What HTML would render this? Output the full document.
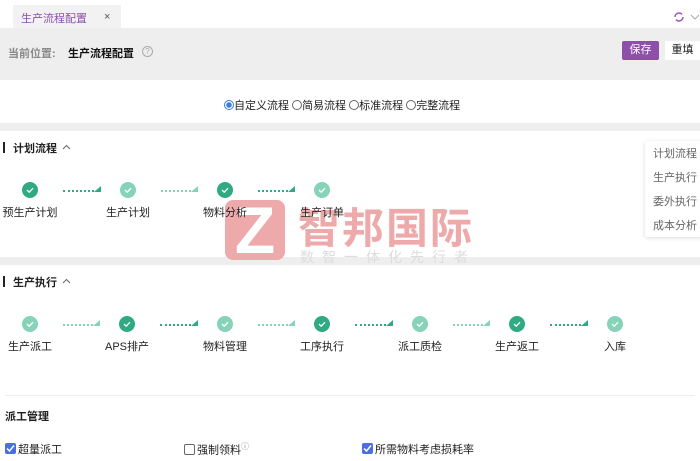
<!DOCTYPE html>
<html><head><meta charset="utf-8"><style>
*{margin:0;padding:0;box-sizing:border-box}
body{width:700px;height:461px;overflow:hidden;background:#fff;font-family:"Liberation Sans","Noto Sans CJK SC",sans-serif;font-size:11px;color:#222;position:relative}
.a{position:absolute;white-space:nowrap}
.c{position:absolute;width:16px;height:16px;border-radius:50%;}
.c svg{position:absolute;left:3px;top:3px}
.d{background:#2faa83}.l{background:#86d3b8}
.ar{position:absolute;height:0;border-top:2px dotted #2faa83;width:30px}
.ar:after{content:"";position:absolute;right:-7px;top:-6px;border-left:7px solid transparent;border-bottom:6px solid #2faa83}
.ar.lt{border-top-color:#86d3b8}.ar.lt:after{border-bottom-color:#86d3b8}
.lb{position:absolute;font-size:11px;transform:translateX(-50%)}
.cb{display:inline-block;width:11px;height:11px;border-radius:2px;vertical-align:-1px;margin-right:2px;position:relative}
</style></head><body>
<div class="a" style="left:0;top:28px;width:700px;height:52px;background:#eee"></div>
<div class="a" style="left:13px;top:5px;width:108px;height:23px;background:#f2f2f2"></div>
<div class="a" style="left:21px;top:10px;color:#8e4fa8;font-size:11px">生产流程配置</div>
<div class="a" style="left:104px;top:11px;color:#555;font-size:11px">×</div>
<svg class="a" style="left:673px;top:11px" width="12" height="12" viewBox="0 0 12 12"><path d="M2 6a4 4 0 0 1 7-2.6M10 6a4 4 0 0 1-7 2.6" stroke="#9b59b6" stroke-width="1.5" fill="none"/></svg>
<svg class="a" style="left:690px;top:13px" width="10" height="8"><path d="M1 2l4 4 4-4" stroke="#aaa" fill="none"/></svg>
<div class="a" style="left:8px;top:45px;color:#888;font-weight:bold;font-size:11px">当前位置: </div>
<div class="a" style="left:68px;top:45px;font-weight:bold;font-size:11px;color:#111">生产流程配置</div>
<div class="a" style="left:142px;top:46px;width:11px;height:11px;border:1px solid #aaa;border-radius:50%;font-size:8px;color:#aaa;text-align:center;line-height:9px">?</div>
<div class="a" style="left:622px;top:41px;width:37px;height:19px;background:#8e4fa8;border-radius:2px;color:#fff;text-align:center;line-height:19px">保存</div>
<div class="a" style="left:665px;top:41px;width:35px;height:19px;background:#fff;text-align:center;line-height:19px">重填</div>
<div class="a" style="left:224px;top:97px;font-size:11px"><span style="display:inline-block;width:10px;height:10px;border:1px solid #3b7de0;border-radius:50%;vertical-align:-1px;background:radial-gradient(#3b7de0 2.5px,#fff 3px)"></span>自定义流程 <span style="display:inline-block;width:10px;height:10px;border:1px solid #666;border-radius:50%;vertical-align:-1px"></span>简易流程 <span style="display:inline-block;width:10px;height:10px;border:1px solid #666;border-radius:50%;vertical-align:-1px"></span>标准流程 <span style="display:inline-block;width:10px;height:10px;border:1px solid #666;border-radius:50%;vertical-align:-1px"></span>完整流程</div>
<div class="a" style="left:0;top:123px;width:700px;height:8px;background:#eee"></div>
<div class="a" style="left:0;top:257px;width:700px;height:8px;background:#eee"></div>
<div class="a" style="left:3px;top:142px;width:2px;height:11px;background:#222"></div>
<div class="a" style="left:13px;top:140px;font-weight:bold">计划流程</div>
<svg class="a" style="left:62px;top:144px" width="9" height="6"><path d="M1 5l3.5-3.5L8 5" stroke="#666" fill="none"/></svg>
<div class="a" style="left:3px;top:276px;width:2px;height:11px;background:#222"></div>
<div class="a" style="left:13px;top:274px;font-weight:bold">生产执行</div>
<svg class="a" style="left:62px;top:278px" width="9" height="6"><path d="M1 5l3.5-3.5L8 5" stroke="#666" fill="none"/></svg>
<!-- watermark -->
<div class="a" style="left:225px;top:200px;width:60px;height:60px;background:#eeaaab;border-radius:8px;color:#fff;font-size:66px;font-weight:bold;text-align:center;line-height:60px;font-family:'Liberation Sans',sans-serif">Z</div>
<div class="a" style="left:298px;top:195px;font-size:42px;color:#eeaaab;font-weight:bold;letter-spacing:2px">智邦国际</div>
<div class="a" style="left:300px;top:247px;font-size:14px;color:#ddd;letter-spacing:8px">数智一体化先行者</div>
<div id="s"></div>
<!-- side panel -->
<div class="a" style="left:645px;top:141px;width:60px;height:96px;background:#fff;box-shadow:0 1px 4px rgba(0,0,0,.15);border-radius:3px"></div>
<div class="a" style="left:653px;top:142px;color:#666;line-height:24px;white-space:normal">计划流程<br>生产执行<br>委外执行<br>成本分析</div>
<div class="a" style="left:5px;top:395px;width:690px;height:1px;background:#eee"></div>
<div class="a" style="left:5px;top:408px;font-weight:bold">派工管理</div>
<div class="a" style="left:5px;top:441px"><span class="cb" style="background:#4a6fe0"><svg style="position:absolute;left:0;top:0" width="11" height="11"><path d="M2 5.5l2.5 2.5L9 2.5" stroke="#fff" stroke-width="1.5" fill="none"/></svg></span>超量派工</div>
<div class="a" style="left:184px;top:441px"><span class="cb" style="border:1px solid #666"></span>强制领料<sup style="font-size:8px;color:#888">ⓘ</sup></div>
<div class="a" style="left:362px;top:441px"><span class="cb" style="background:#4a6fe0"><svg style="position:absolute;left:0;top:0" width="11" height="11"><path d="M2 5.5l2.5 2.5L9 2.5" stroke="#fff" stroke-width="1.5" fill="none"/></svg></span>所需物料考虑损耗率</div>
<script>
var ck='<svg width="10" height="10"><path d="M2 5l2.2 2.2L8 3.2" stroke="#fff" stroke-width="1.3" fill="none"/></svg>';
function row(y,items){var h='';items.forEach(function(it,i){var x=it[0];h+='<div class="c '+it[2]+'" style="left:'+(x-8)+'px;top:'+(y-8)+'px">'+ck+'</div><div class="lb" style="left:'+x+'px;top:'+(y+14)+'px">'+it[1]+'</div>';if(i<items.length-1){var nx=items[i+1][0];h+='<div class="ar '+(it[2]=='l'?'lt':'')+'" style="left:'+(x+33)+'px;top:'+y+'px;width:'+(nx-x-67)+'px"></div>';}});return h;}
var h=row(190,[[30,'预生产计划','d'],[128,'生产计划','l'],[225,'物料分析','d'],[322,'生产订单','l']]);
h+=row(324,[[30,'生产派工','l'],[127,'APS排产','d'],[225,'物料管理','l'],[322,'工序执行','d'],[420,'派工质检','l'],[517,'生产返工','d'],[615,'入库','l']]);
document.getElementById('s').innerHTML=h;
</script>
</body></html>
